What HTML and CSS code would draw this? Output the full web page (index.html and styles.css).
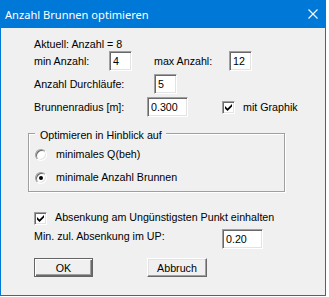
FILE: index.html
```html
<!DOCTYPE html>
<html>
<head>
  <title>Anzahl Brunnen optimieren</title>
  <link rel="stylesheet" href="styles.css">
</head>
<body>
  <div class="dialog">
    <div class="titlebar">
      <span class="title">Anzahl Brunnen optimieren</span>
      <svg class="close" width="10" height="10" viewBox="0 0 10 10">
        <path d="M0.5 0.5 L9.5 9.5 M9.5 0.5 L0.5 9.5" stroke="#fff" stroke-width="1.1"/>
      </svg>
    </div>

    <div class="content">
      <div class="info">Aktuell: Anzahl = 8</div>

      <div class="row">
        <label class="lbl" style="width: 75px">min Anzahl:</label>
        <input class="field" style="width: 23px" type="text" value="4">
        <label class="lbl gap-max" style="width: 75px">max Anzahl:</label>
        <input class="field" style="width: 23px" type="text" value="12">
      </div>

      <div class="row spaced">
        <label class="lbl" style="width: 120px">Anzahl Durchläufe:</label>
        <input class="field" style="width: 23px" type="text" value="5">
      </div>

      <div class="row spaced">
        <label class="lbl" style="width: 113px">Brunnenradius [m]:</label>
        <input class="field" style="width: 41px" type="text" value="0.300">
        <span class="check gap-graphik">
          <svg width="7" height="7" viewBox="0 0 7 7"><polygon points="0,2 2.5,4.5 7,0 7,2.6 2.5,7 0,4.6" fill="#000"/></svg>
        </span>
        <span class="check-text">mit Graphik</span>
      </div>

      <div class="group">
        <span class="group-title">Optimieren in Hinblick auf</span>
        <div class="option first">
          <span class="radio"></span>
          <span class="option-text">minimales Q(beh)</span>
        </div>
        <div class="option">
          <span class="radio on"></span>
          <span class="option-text">minimale Anzahl Brunnen</span>
        </div>
      </div>

      <div class="check-row">
        <span class="check">
          <svg width="7" height="7" viewBox="0 0 7 7"><polygon points="0,2 2.5,4.5 7,0 7,2.6 2.5,7 0,4.6" fill="#000"/></svg>
        </span>
        <span class="check-text">Absenkung am Ungünstigsten Punkt einhalten</span>
      </div>

      <div class="row min-row">
        <label class="lbl top" style="width: 188px">Min. zul. Absenkung im UP:</label>
        <input class="field" style="width: 41px" type="text" value="0.20">
      </div>

      <div class="buttons">
        <button class="btn default">OK</button>
        <button class="btn">Abbruch</button>
      </div>
    </div>
  </div>
</body>
</html>
```

FILE: styles.css
```css
body {
  margin: 0;
  background-color: #ffffff;
  font-family: "Liberation Sans", Arial, sans-serif;
  font-size: 10.7px;
  line-height: 13px;
  color: #000000;
}

.dialog {
  width: 326px;
  height: 296px;
  box-sizing: border-box;
  border: 1px solid #0078d7;
  background-color: #f0f0f0;
}

.titlebar {
  height: 27px;
  background-color: #0078d7;
  display: flex;
  align-items: center;
  justify-content: space-between;
  padding: 0 7px 0 4px;
}

.title {
  font-family: "Noto Sans", sans-serif;
  font-size: 11.1px;
  color: #ffffff;
  margin-top: -1px;
}

.close {
  margin-top: -1px;
}

.content {
  padding: 10px 0 0 33px;
}

.info {
  height: 13px;
}

.row {
  display: flex;
  align-items: center;
  height: 20px;
}

.row.spaced {
  margin-top: 3px;
}

.lbl {
  flex: none;
}

.lbl.top {
  align-self: flex-start;
  margin-top: 1px;
}

.gap-max {
  margin-left: 22px;
}

.field {
  box-sizing: border-box;
  height: 20px;
  margin: 0;
  padding: 0 0 0 3px;
  font-family: "Liberation Sans", Arial, sans-serif;
  font-size: 10.7px;
  color: #000000;
  background-color: #ffffff;
  border: 1px solid;
  border-color: #a0a0a0 #ffffff #ffffff #a0a0a0;
  box-shadow: inset 1px 1px 0 #696969, inset -1px -1px 0 #e3e3e3;
  outline: none;
}

.check {
  flex: none;
  box-sizing: border-box;
  width: 13px;
  height: 13px;
  background-color: #ffffff;
  border: 1px solid;
  border-color: #a0a0a0 #ffffff #ffffff #a0a0a0;
  box-shadow: inset 1px 1px 0 #696969, inset -1px -1px 0 #e3e3e3;
  display: flex;
  align-items: center;
  justify-content: center;
}

.gap-graphik {
  margin-left: 34px;
}

.check-text {
  margin-left: 8px;
}

.group {
  box-sizing: border-box;
  width: 257px;
  height: 59px;
  margin: 16px 0 0 -6px;
  border: 1px solid #a0a0a0;
  box-shadow: inset 1px 1px 0 #ffffff, 1px 1px 0 #ffffff;
}

.group-title {
  display: block;
  width: fit-content;
  margin: -5px 0 0 6px;
  padding: 0 4px 0 5px;
  background-color: #f0f0f0;
}

.option {
  display: flex;
  align-items: center;
  height: 13px;
  margin: 10px 0 0 6px;
}

.option.first {
  margin-top: 6px;
}

.radio {
  box-sizing: border-box;
  width: 12px;
  height: 12px;
  border-radius: 50%;
  background-color: #ffffff;
  border: 1px solid;
  border-color: #a0a0a0 #ffffff #ffffff #a0a0a0;
  box-shadow: inset 1px 1px 0 #696969, inset -1px -1px 0 #e3e3e3;
  display: flex;
  align-items: center;
  justify-content: center;
}

.radio.on::after {
  content: "";
  width: 4px;
  height: 4px;
  border-radius: 50%;
  background-color: #000000;
}

.option-text {
  margin-left: 9px;
}

.check-row {
  display: flex;
  align-items: flex-start;
  height: 14px;
  margin-top: 19px;
}

.check-row .check {
  margin-top: 1px;
}

.min-row {
  margin-top: 4px;
}

.buttons {
  display: flex;
  margin-top: 9px;
}

.btn {
  box-sizing: border-box;
  width: 60px;
  height: 19px;
  margin: 0 54px 0 0;
  padding: 0;
  font-family: "Liberation Sans", Arial, sans-serif;
  font-size: 10.7px;
  color: #000000;
  background-color: #f0f0f0;
  border: 1px solid;
  border-color: #ffffff #696969 #696969 #ffffff;
  box-shadow: inset -1px -1px 0 #a0a0a0, inset 1px 1px 0 #e3e3e3;
}

.btn.default {
  width: 59px;
  border-color: #646464;
  box-shadow: inset 1px 1px 0 #ffffff, inset -1px -1px 0 #696969, inset -2px -2px 0 #a0a0a0;
}
```
